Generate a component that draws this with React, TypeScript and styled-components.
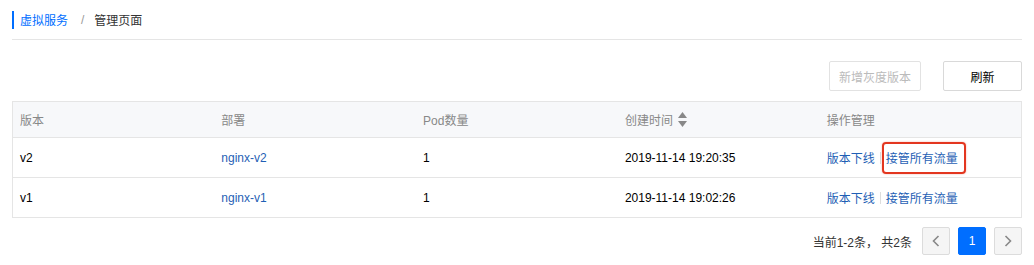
import React from "react";
import styled, { createGlobalStyle } from "styled-components";

const GlobalStyle = createGlobalStyle`
  body {
    margin: 0;
    background: #fff;
    font-family: "Liberation Sans", "Noto Sans CJK SC", sans-serif;
    font-size: 12px;
    color: #000;
  }
`;

const Page = styled.div`
  width: 1034px;
  padding: 0 12px;
  box-sizing: border-box;
`;

const Breadcrumb = styled.div`
  height: 40px;
  display: flex;
  align-items: center;
  border-bottom: 1px solid #e5e5e5;
  box-sizing: border-box;
`;

const CrumbLink = styled.a`
  display: flex;
  align-items: center;
  height: 18px;
  padding-left: 6px;
  border-left: 2px solid #006eff;
  color: #006eff;
  text-decoration: none;
  font-size: 12px;
`;

const CrumbSep = styled.span`
  margin: 0 10px 0 13px;
  color: #999;
`;

const CrumbCurrent = styled.span`
  color: #333;
`;

const Toolbar = styled.div`
  display: flex;
  justify-content: flex-end;
  gap: 22px;
  margin-top: 21px;
`;

const Button = styled.button<{ disabled?: boolean }>`
  height: 30px;
  min-width: 79px;
  padding: 0 9px;
  box-sizing: border-box;
  font-family: inherit;
  font-size: 12px;
  background: #fff;
  border: 1px solid ${({ disabled }) => (disabled ? "#e2e2e2" : "#d9d9d9")};
  color: ${({ disabled }) => (disabled ? "#bbb" : "#000")};
  border-radius: 2px;
  cursor: ${({ disabled }) => (disabled ? "not-allowed" : "pointer")};
`;

const Table = styled.table`
  width: 100%;
  margin-top: 10px;
  border-collapse: collapse;
  table-layout: fixed;
  border: 1px solid #e5e5e5;
`;

const Th = styled.th`
  height: 35px;
  padding: 0 7px;
  text-align: left;
  font-weight: normal;
  color: #888;
  background: #f7f8fa;
  border-bottom: 1px solid #e5e5e5;
`;

const Td = styled.td`
  height: 39px;
  padding: 0 7px;
  color: #000;
  border-bottom: 1px solid #e5e5e5;
`;

const SortHead = styled.span`
  display: inline-flex;
  align-items: center;
  gap: 5px;
`;

const Link = styled.a`
  color: #1f5fb5;
  text-decoration: none;
  position: relative;
`;

const Marked = styled(Link)`
  &::after {
    content: "";
    position: absolute;
    left: -4px;
    right: -8px;
    top: -7px;
    bottom: -8px;
    border: 2px solid #e3361f;
    border-radius: 4px;
    box-shadow: 0 0 2px rgba(227, 54, 31, 0.4);
  }
`;

const Actions = styled.div`
  display: flex;
  align-items: center;
`;

const Divider = styled.span`
  width: 1px;
  height: 12px;
  margin: 0 5px;
  background: #ddd;
`;

const Pager = styled.div`
  display: flex;
  justify-content: flex-end;
  align-items: center;
  margin-top: 9px;
  gap: 8px;
`;

const PagerText = styled.span`
  color: #333;
  margin-right: 2px;
`;

const PageButton = styled.button<{ active?: boolean }>`
  width: 28px;
  height: 28px;
  display: flex;
  align-items: center;
  justify-content: center;
  padding: 0;
  font-family: inherit;
  font-size: 12px;
  border-radius: 2px;
  border: 1px solid ${({ active }) => (active ? "#006eff" : "#dcdcdc")};
  background: ${({ active }) => (active ? "#006eff" : "#f5f5f5")};
  color: ${({ active }) => (active ? "#fff" : "#888")};
`;

const SortIcon = () => (
  <svg width="9" height="15" viewBox="0 0 9 15">
    <path d="M4.5 0 L9 6 H0 Z" fill="#888" />
    <path d="M4.5 15 L9 9 H0 Z" fill="#888" />
  </svg>
);

const Chevron = ({ dir }: { dir: "left" | "right" }) => (
  <svg width="8" height="12" viewBox="0 0 8 12">
    <path
      d={dir === "left" ? "M6.5 1 L1.5 6 L6.5 11" : "M1.5 1 L6.5 6 L1.5 11"}
      fill="none"
      stroke="#888"
      strokeWidth="1.6"
    />
  </svg>
);

const rows = [
  { version: "v2", deploy: "nginx-v2", pods: 1, created: "2019-11-14 19:20:35", marked: true },
  { version: "v1", deploy: "nginx-v1", pods: 1, created: "2019-11-14 19:02:26", marked: false },
];

const App = () => {
  return (
    <Page>
      <GlobalStyle />
      <Breadcrumb>
        <CrumbLink href="#">虚拟服务</CrumbLink>
        <CrumbSep>/</CrumbSep>
        <CrumbCurrent>管理页面</CrumbCurrent>
      </Breadcrumb>
      <Toolbar>
        <Button disabled>新增灰度版本</Button>
        <Button>刷新</Button>
      </Toolbar>
      <Table>
        <thead>
          <tr>
            <Th>版本</Th>
            <Th>部署</Th>
            <Th>Pod数量</Th>
            <Th>
              <SortHead>
                创建时间 <SortIcon />
              </SortHead>
            </Th>
            <Th>操作管理</Th>
          </tr>
        </thead>
        <tbody>
          {rows.map((row) => (
            <tr key={row.version}>
              <Td>{row.version}</Td>
              <Td>
                <Link href="#">{row.deploy}</Link>
              </Td>
              <Td>{row.pods}</Td>
              <Td>{row.created}</Td>
              <Td>
                <Actions>
                  <Link href="#">版本下线</Link>
                  <Divider />
                  {row.marked ? (
                    <Marked href="#">接管所有流量</Marked>
                  ) : (
                    <Link href="#">接管所有流量</Link>
                  )}
                </Actions>
              </Td>
            </tr>
          ))}
        </tbody>
      </Table>
      <Pager>
        <PagerText>当前1-2条， 共2条</PagerText>
        <PageButton>
          <Chevron dir="left" />
        </PageButton>
        <PageButton active>1</PageButton>
        <PageButton>
          <Chevron dir="right" />
        </PageButton>
      </Pager>
    </Page>
  );
};

export default App;
